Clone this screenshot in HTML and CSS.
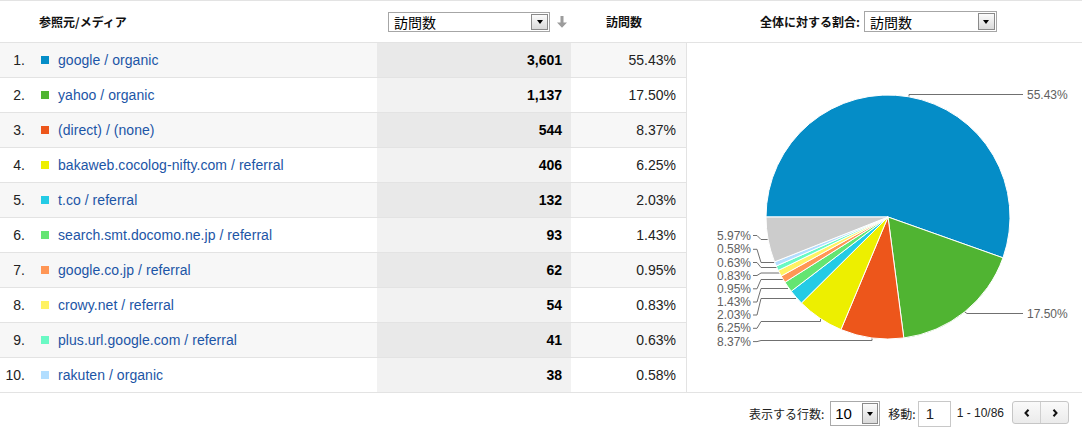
FILE: index.html
```html
<!DOCTYPE html>
<html lang="ja">
<head>
<meta charset="utf-8">
<title>参照元/メディア</title>
<link rel="stylesheet" href="styles.css">
</head>
<body>
<div class="report">
  <div class="head">
    <div class="h-src">参照元/メディア</div>
    <div class="h-metric">
      <div class="select sel-metric"><span class="val">訪問数</span><span class="btn"><i class="tri"></i></span></div>
      <svg class="sort-arrow" width="12" height="12" viewBox="0 0 12 12"><path d="M4.5 0h3v6.5H11L6 11.8 1 6.5h3.5z" fill="#9c9c9c"/></svg>
    </div>
    <div class="h-visits">訪問数</div>
    <div class="h-share">
      <span class="lbl">全体に対する割合:</span>
      <div class="select sel-share"><span class="val">訪問数</span><span class="btn"><i class="tri"></i></span></div>
    </div>
  </div>
  <div class="main">
    <div class="rows">
      <div class="row odd"><div class="c-src"><span class="num">1.</span><i class="sq s1"></i><a href="#">google / organic</a></div><div class="c-vis">3,601</div><div class="c-pct">55.43%</div></div>
      <div class="row"><div class="c-src"><span class="num">2.</span><i class="sq s2"></i><a href="#">yahoo / organic</a></div><div class="c-vis">1,137</div><div class="c-pct">17.50%</div></div>
      <div class="row odd"><div class="c-src"><span class="num">3.</span><i class="sq s3"></i><a href="#">(direct) / (none)</a></div><div class="c-vis">544</div><div class="c-pct">8.37%</div></div>
      <div class="row"><div class="c-src"><span class="num">4.</span><i class="sq s4"></i><a href="#">bakaweb.cocolog-nifty.com / referral</a></div><div class="c-vis">406</div><div class="c-pct">6.25%</div></div>
      <div class="row odd"><div class="c-src"><span class="num">5.</span><i class="sq s5"></i><a href="#">t.co / referral</a></div><div class="c-vis">132</div><div class="c-pct">2.03%</div></div>
      <div class="row"><div class="c-src"><span class="num">6.</span><i class="sq s6"></i><a href="#">search.smt.docomo.ne.jp / referral</a></div><div class="c-vis">93</div><div class="c-pct">1.43%</div></div>
      <div class="row odd"><div class="c-src"><span class="num">7.</span><i class="sq s7"></i><a href="#">google.co.jp / referral</a></div><div class="c-vis">62</div><div class="c-pct">0.95%</div></div>
      <div class="row"><div class="c-src"><span class="num">8.</span><i class="sq s8"></i><a href="#">crowy.net / referral</a></div><div class="c-vis">54</div><div class="c-pct">0.83%</div></div>
      <div class="row odd"><div class="c-src"><span class="num">9.</span><i class="sq s9"></i><a href="#">plus.url.google.com / referral</a></div><div class="c-vis">41</div><div class="c-pct">0.63%</div></div>
      <div class="row"><div class="c-src"><span class="num">10.</span><i class="sq s10"></i><a href="#">rakuten / organic</a></div><div class="c-vis">38</div><div class="c-pct">0.58%</div></div>
    </div>
    <div class="chart">
      <svg class="pie" width="395" height="349" viewBox="687 43 395 349">
        <g class="leaders" fill="none" stroke="#707070" stroke-width="1">
          <path d="M909 97V94.5H1023"/>
          <path d="M964.7 311.9L967 313.5H1023"/>
          <path d="M753 235.5H757L761 239.5H768.5"/>
          <path d="M753 249.3H757L761 262.5H775.5"/>
          <path d="M753 262.5H757L761 267.5H777.5"/>
          <path d="M753 275.5H757L761 273H780"/>
          <path d="M753 288.8H757L761 279.5H783"/>
          <path d="M753 302H757L761 288.5H788"/>
          <path d="M753 315H757L761 298.5H796"/>
          <path d="M753 328.3H757L761 321.5H820.5V318"/>
          <path d="M753 341.6H757L761 340.5H872V337"/>
        </g>
        <g stroke="#fff" stroke-width="1" stroke-linejoin="round">
          <path fill="#058dc7" d="M888 217L766 217A122 122 0 1 1 1002.97 257.82Z"/>
          <path fill="#50b432" d="M888 217L1002.97 257.82A122 122 0 0 1 903.82 337.97Z"/>
          <path fill="#ed561b" d="M888 217L903.82 337.97A122 122 0 0 1 840.96 329.57Z"/>
          <path fill="#edef00" d="M888 217L840.96 329.57A122 122 0 0 1 801.45 302.99Z"/>
          <path fill="#24cbe5" d="M888 217L801.45 302.99A122 122 0 0 1 791.2 291.26Z"/>
          <path fill="#64e572" d="M888 217L791.2 291.26A122 122 0 0 1 784.96 282.3Z"/>
          <path fill="#ff9655" d="M888 217L784.96 282.3A122 122 0 0 1 781.24 276.04Z"/>
          <path fill="#fff263" d="M888 217L781.24 276.04A122 122 0 0 1 778.3 270.39Z"/>
          <path fill="#6af9c4" d="M888 217L778.3 270.39A122 122 0 0 1 776.27 266Z"/>
          <path fill="#b2deff" d="M888 217L776.27 266A122 122 0 0 1 774.56 261.88Z"/>
          <path fill="#cccccc" d="M888 217L774.56 261.88A122 122 0 0 1 766 217Z"/>
        </g>
        <g class="labels" font-size="12" fill="#606060">
          <text x="1027" y="98.5">55.43%</text>
          <text x="1027" y="317.5">17.50%</text>
          <g text-anchor="end">
            <text x="751" y="239.5">5.97%</text>
            <text x="751" y="253.3">0.58%</text>
            <text x="751" y="266.5">0.63%</text>
            <text x="751" y="279.5">0.83%</text>
            <text x="751" y="292.8">0.95%</text>
            <text x="751" y="306">1.43%</text>
            <text x="751" y="319">2.03%</text>
            <text x="751" y="332.3">6.25%</text>
            <text x="751" y="345.6">8.37%</text>
          </g>
        </g>
      </svg>
    </div>
  </div>
  <div class="foot">
    <span class="f-lbl">表示する行数:</span>
    <div class="select sel-rows"><span class="val">10</span><span class="btn"><i class="tri"></i></span></div>
    <span class="f-lbl f-move">移動:</span>
    <div class="goto">1</div>
    <span class="range">1 - 10/86</span>
    <div class="pager">
      <span class="pg"><svg width="6" height="8" viewBox="0 0 6 8"><path d="M4.5 0.8L1.5 4l3 3.2" fill="none" stroke="#111" stroke-width="2"/></svg></span>
      <span class="pg"><svg width="6" height="8" viewBox="0 0 6 8"><path d="M1.5 0.8L4.5 4l-3 3.2" fill="none" stroke="#111" stroke-width="2"/></svg></span>
    </div>
  </div>
</div>
</body>
</html>
```

FILE: styles.css
```css
* { box-sizing: border-box; }
html, body { margin: 0; padding: 0; background: #fff; }
body {
  font-family: "Liberation Sans", Arial, "Noto Sans CJK JP", sans-serif;
  color: #222;
  width: 1082px;
  height: 434px;
  overflow: hidden;
}
.report { width: 1082px; border-top: 1px solid #e3e3e3; }

.head {
  display: flex;
  align-items: center;
  height: 42px;
  border-bottom: 1px solid #e3e3e3;
  font-family: "Noto Sans CJK JP", "Liberation Sans", sans-serif;
  font-size: 12px;
  font-weight: bold;
  color: #111;
}
.h-src { width: 377px; padding-left: 39px; }
.h-metric { width: 194px; padding-left: 11px; display: flex; align-items: center; }
.sort-arrow { margin-left: 6px; margin-top: 1px; }
.h-visits { width: 115px; padding-left: 35px; }
.h-share { flex: 1; padding-left: 74px; display: flex; align-items: center; }
.h-share .lbl { margin-right: 4px; }

.select {
  display: flex;
  align-items: center;
  background: #fff;
  border: 1px solid #a6a6a6;
  font-family: "Noto Sans CJK JP", sans-serif;
  font-weight: normal;
  color: #000;
}
.select .val { flex: 1; padding-left: 5px; font-size: 14px; line-height: 1; }
.select .btn {
  width: 17px;
  align-self: stretch;
  margin: 1px;
  border: 1px solid #8a8a8a;
  background: linear-gradient(#fbfbfb, #dadada);
  display: flex;
  align-items: center;
  justify-content: center;
}
.tri {
  display: block;
  width: 0;
  height: 0;
  border-left: 3.5px solid transparent;
  border-right: 3.5px solid transparent;
  border-top: 4px solid #000;
}
.sel-metric { width: 162px; height: 20px; }
.sel-share { width: 133px; height: 21px; }

.main { display: flex; }
.rows { width: 687px; }
.row {
  display: flex;
  height: 35px;
  border-bottom: 1px solid #e3e3e3;
  font-size: 14px;
  line-height: 34px;
}
.c-src { width: 377px; display: flex; align-items: center; background: #fff; }
.c-vis { width: 194px; text-align: right; padding-right: 9px; font-weight: bold; color: #000; background: #f2f2f2; }
.c-pct { width: 116px; text-align: right; padding-right: 10px; border-right: 1px solid #e3e3e3; color: #222; background: #fff; }
.row.odd .c-src, .row.odd .c-pct { background: #f7f7f7; }
.row.odd .c-vis { background: #e9e9e9; }
.num { width: 25px; text-align: right; color: #222; }
.sq { display: block; width: 8px; height: 8px; margin-left: 16px; margin-right: 9px; }
.c-src a { color: #1c55a6; text-decoration: none; letter-spacing: 0.05px; }
.s1 { background: #058dc7; }
.s2 { background: #50b432; }
.s3 { background: #ed561b; }
.s4 { background: #edef00; }
.s5 { background: #24cbe5; }
.s6 { background: #64e572; }
.s7 { background: #ff9655; }
.s8 { background: #fff263; }
.s9 { background: #6af9c4; }
.s10 { background: #b2deff; }

.chart { flex: 1; height: 350px; border-bottom: 1px solid #e3e3e3; }
.pie { display: block; font-family: "Liberation Sans", Arial, sans-serif; }

.foot {
  display: flex;
  align-items: center;
  justify-content: flex-end;
  height: 41px;
  padding-right: 13px;
  font-size: 12px;
  color: #222;
}
.f-lbl { font-family: "Noto Sans CJK JP", sans-serif; margin-right: 6px; }
.f-move { margin-left: 8px; margin-right: 2px; }
.sel-rows { width: 50px; height: 25px; border-color: #a9a9a9; }
.sel-rows .val { font-family: "Liberation Sans", Arial, sans-serif; padding-left: 4px; font-size: 15px; }
.sel-rows .btn { width: 16px; margin: 1px; }
.goto {
  width: 33px;
  height: 26px;
  border: 1px solid #c8c8c8;
  font-size: 15px;
  line-height: 24px;
  padding-left: 7px;
  margin-top: 1px;
}
.range { margin-left: 6px; margin-right: 8px; font-size: 12px; margin-top: -2px; }
.pager {
  display: flex;
  width: 57px;
  height: 23px;
  border: 1px solid #c6c6c6;
  border-radius: 3px;
  background: linear-gradient(#fafafa, #ebebeb);
  margin-top: -2px;
}
.pg { flex: 1; display: flex; align-items: center; justify-content: center; }
.pg + .pg { border-left: 1px solid #cfcfcf; }
```
